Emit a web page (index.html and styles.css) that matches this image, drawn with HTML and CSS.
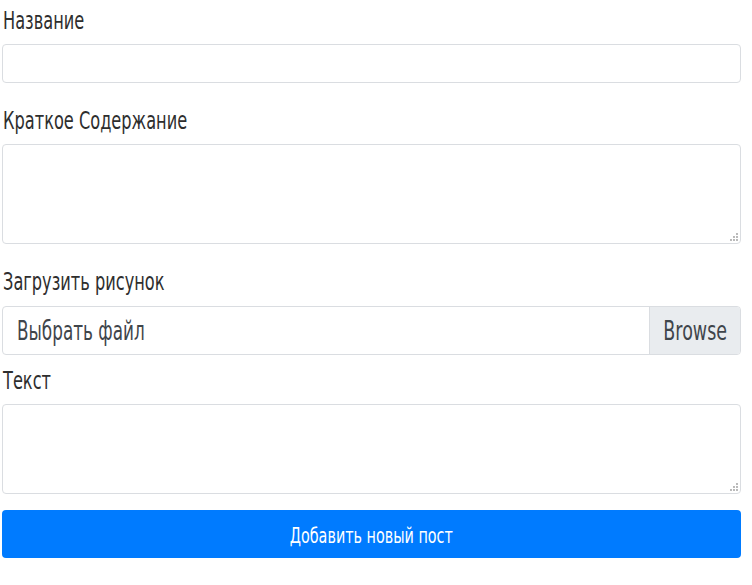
FILE: index.html
```html
<!DOCTYPE html>
<html lang="ru">
<head>
<meta charset="utf-8">
<title>Новый пост</title>
<link rel="stylesheet" href="styles.css">
</head>
<body>
<form class="post-form">
  <div class="group">
    <label class="label" for="title"><span class="narrow">Название</span></label>
    <input class="control input" id="title" type="text">
  </div>
  <div class="group">
    <label class="label" for="summary"><span class="narrow">Краткое Содержание</span></label>
    <div class="area-wrap">
      <textarea class="control area area-lg" id="summary"></textarea>
      <svg class="grip" width="8" height="8" viewBox="0 0 8 8"><g fill="#9a9a9a"><circle cx="7" cy="1" r="0.9"/><circle cx="7" cy="4" r="0.9"/><circle cx="4" cy="4" r="0.9"/><circle cx="7" cy="7" r="0.9"/><circle cx="4" cy="7" r="0.9"/><circle cx="1" cy="7" r="0.9"/></g></svg>
    </div>
  </div>
  <div class="group group-file">
    <label class="label label-file"><span class="narrow">Загрузить рисунок</span></label>
    <div class="file">
      <span class="file-text"><span class="narrow">Выбрать файл</span></span>
      <span class="file-btn"><span class="narrow center">Browse</span></span>
    </div>
  </div>
  <div class="group group-text">
    <label class="label label-tight" for="text"><span class="narrow">Текст</span></label>
    <div class="area-wrap">
      <textarea class="control area area-md" id="text"></textarea>
      <svg class="grip" width="8" height="8" viewBox="0 0 8 8"><g fill="#9a9a9a"><circle cx="7" cy="1" r="0.9"/><circle cx="7" cy="4" r="0.9"/><circle cx="4" cy="4" r="0.9"/><circle cx="7" cy="7" r="0.9"/><circle cx="4" cy="7" r="0.9"/><circle cx="1" cy="7" r="0.9"/></g></svg>
    </div>
  </div>
  <button class="submit" type="button"><span class="narrow center btn-text">Добавить новый пост</span></button>
</form>
</body>
</html>
```
FILE: styles.css
```css
html, body {
  margin: 0;
  padding: 0;
  background: #ffffff;
}
body {
  font-family: "DejaVu Sans", "Liberation Sans", sans-serif;
  font-stretch: condensed;
  color: #2e2e2e;
}
.narrow {
  display: inline-block;
  white-space: nowrap;
  transform: scaleX(0.72);
  transform-origin: left center;
}
.center {
  transform-origin: center center;
}
.post-form {
  width: 739px;
  margin-left: 2px;
  display: flex;
  flex-direction: column;
}
.group {
  display: flex;
  flex-direction: column;
  margin-bottom: 17px;
}
.group-file {
  margin-bottom: 0;
}
.group-text {
  margin-bottom: 16px;
}
.label {
  display: block;
  font-size: 25px;
  line-height: 30px;
  padding-top: 6px;
  height: 37px;
  margin-left: 1px;
  box-sizing: border-box;
  margin-bottom: 7px;
  color: #2e2e2e;
}
.label-file {
  margin-bottom: 8px;
}
.label-tight {
  padding-top: 11px;
  height: 44px;
  margin-bottom: 5px;
}
.control {
  box-sizing: border-box;
  width: 100%;
  border: 1px solid #dadde1;
  border-radius: 4px;
  background: #fff;
  margin: 0;
  font-family: inherit;
  font-size: 20px;
  padding: 6px 12px;
}
.input {
  height: 39px;
}
.area-wrap {
  position: relative;
}
.area {
  display: block;
  resize: none;
}
.area-lg {
  height: 100px;
}
.area-md {
  height: 90px;
}
.grip {
  position: absolute;
  right: 3px;
  bottom: 3px;
}
.file {
  display: flex;
  height: 49px;
  box-sizing: border-box;
  border: 1px solid #dadde1;
  border-radius: 4px;
  overflow: hidden;
  align-items: stretch;
}
.file-text {
  flex: 1;
  display: flex;
  align-items: center;
  padding-left: 14px;
  font-size: 26px;
  color: #3f454b;
}
.file-btn {
  width: 90px;
  display: flex;
  align-items: center;
  justify-content: center;
  background: #e9ecef;
  border-left: 1px solid #dadde1;
  font-size: 27px;
  color: #3f454b;
}
.submit {
  height: 48px;
  width: 100%;
  border: 0;
  border-radius: 4px;
  background: #007bff;
  color: #fff;
  font-family: inherit;
  font-stretch: condensed;
  font-size: 21px;
  padding: 0;
  display: flex;
  align-items: center;
  justify-content: center;
}
.btn-text {
  transform: scaleX(0.76);
  padding-top: 4px;
}
```
